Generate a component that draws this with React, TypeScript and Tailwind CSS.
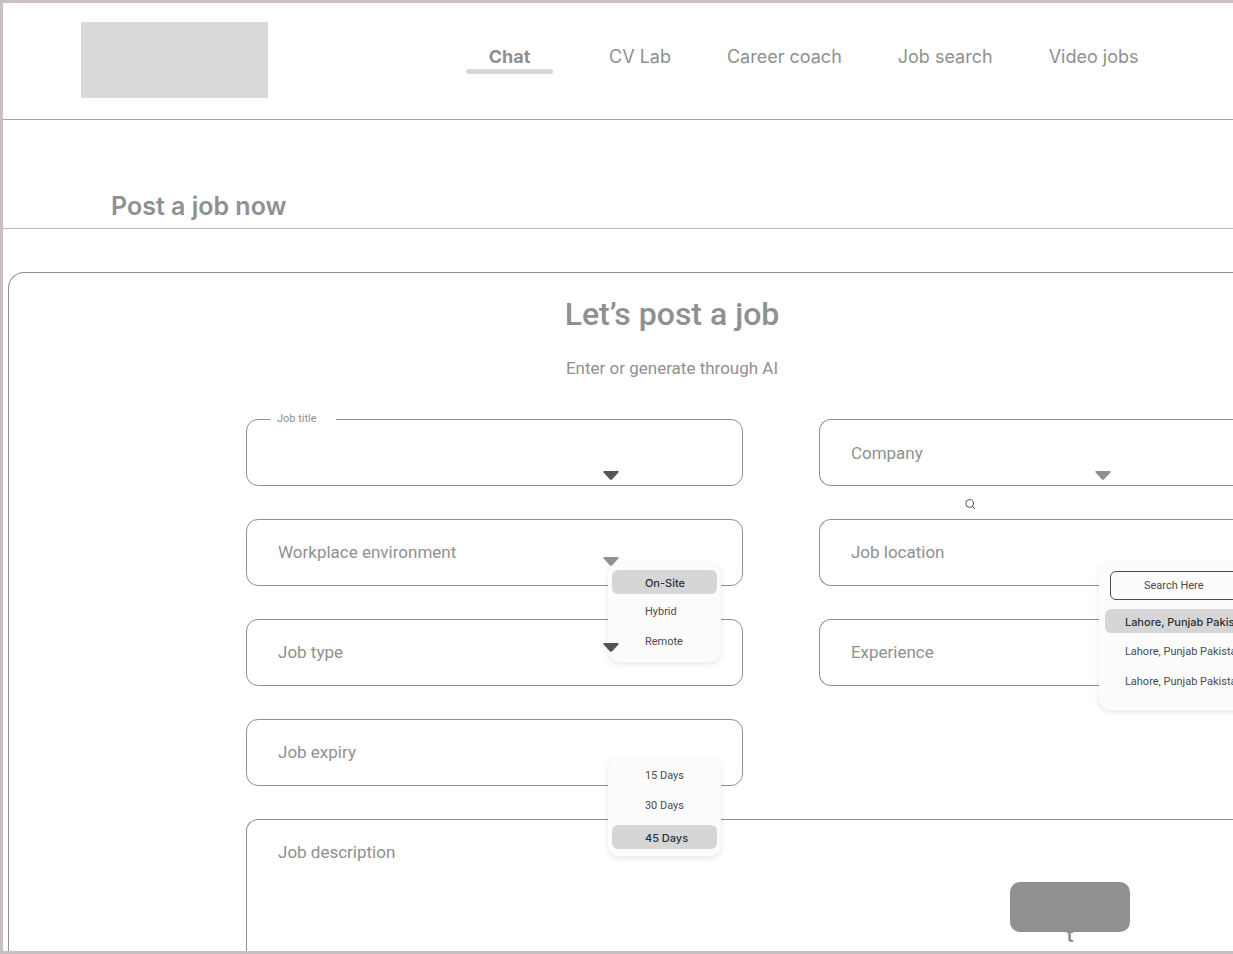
import React from "react";

const navItems = ["CV Lab", "Career coach", "Job search", "Video jobs"];

const fieldBox =
  "block h-[67px] w-full appearance-none border border-[#909090] bg-white pl-[31px] font-[Roboto,sans-serif] text-[17px] text-[#909090] placeholder-[#909090] outline-none";
const panelBox =
  "absolute z-10 rounded-xl bg-[#fcfcfc] shadow-[0_2px_6px_rgba(0,0,0,0.1)] font-[Roboto,sans-serif] text-[11px] leading-4 text-[#4b4b4b]";
const activeItem =
  "block h-6 w-full rounded-md bg-[#d6d6d6] pt-0.5 text-left font-[Inter,sans-serif] text-[11px] font-medium text-[#263238]";

function Caret({ className }: { className: string }) {
  return (
    <svg viewBox="0 0 16 9" className={`absolute z-20 h-[9px] w-4 ${className}`} aria-hidden="true">
      <path
        d="M1.2 0h13.6c.9 0 1.3.9.6 1.5L9.2 8.3c-.7.7-1.7.7-2.4 0L.6 1.5C-.1.9.3 0 1.2 0Z"
        fill="currentColor"
      />
    </svg>
  );
}

function SelectField({ label, open }: { label: string; open?: boolean }) {
  return (
    <select
      aria-label={label}
      className={`${fieldBox} ${open ? "rounded-l-xl border-r-0" : "rounded-xl"}`}
    >
      <option>{label}</option>
    </select>
  );
}

export default function App() {
  return (
    <div className="flex min-h-screen flex-col overflow-hidden border-y-3 border-l-3 border-[#c8c0c0] bg-white font-[Inter,sans-serif] text-[#909090]">
      <header className="flex h-[117px] shrink-0 items-start border-b border-[#a3a3a3] pl-[78px] pt-[19px]">
        <div className="h-[76px] w-[187px] shrink-0 bg-[#d9d9d9]" />
        <nav className="ml-[198px] flex gap-14 whitespace-nowrap pt-[21px] text-lg leading-7">
          <a href="#chat" className="flex w-[87px] flex-col items-center font-bold">
            <span className="h-[26px]">Chat</span>
            <span className="h-[5px] w-full rounded-full bg-[#d6d6d6]" />
          </a>
          {navItems.map((item) => (
            <a key={item} href="#nav">
              {item}
            </a>
          ))}
        </nav>
      </header>

      <div className="flex h-[109px] shrink-0 items-end border-b border-[#b8b8b8] pb-[6px] pl-[108px]">
        <h1 className="text-[25px] font-semibold leading-8">Post a job now</h1>
      </div>

      <main className="ml-[5px] mt-[43px] flex flex-1 flex-col rounded-tl-2xl border-l border-t border-[#909090]">
        <div className="pl-[102px] pt-[21px] text-center font-[Roboto,sans-serif]">
          <h2 className="text-[32px] font-medium leading-10">Let’s post a job</h2>
          <p className="mt-[22px] text-[17px] leading-6">Enter or generate through AI</p>
        </div>

        <form className="mt-[39px] flex flex-1 flex-col gap-[33px] pl-[237px]">
          <div className="grid grid-cols-[6fr_5fr] gap-x-[76px] gap-y-[33px]">
            <div className="relative">
              <input id="job-title" type="text" className={`${fieldBox} rounded-xl`} />
              <label
                htmlFor="job-title"
                className="absolute left-6 -top-2 w-[66px] bg-white pl-[7px] font-[Roboto,sans-serif] text-[11px] leading-4"
              >
                Job title
              </label>
              <Caret className="right-[124px] top-[52px] text-[#555555]" />
            </div>
            <div className="relative">
              <input
                type="text"
                aria-label="Company"
                placeholder="Company"
                className={`${fieldBox} rounded-l-xl border-r-0`}
              />
              <Caret className="left-[276px] top-[52px] text-[#909090]" />
            </div>

            <div className="relative">
              <SelectField label="Workplace environment" />
              <Caret className="right-[124px] top-[38px] text-[#909090]" />
              <div className={`${panelBox} right-[22px] top-11 h-[99px] w-[113px] px-1 pt-[7px]`}>
                <button type="button" className={`${activeItem} pl-[33px]`}>
                  On-Site
                </button>
                <button type="button" className="mt-[10px] block w-full pl-[33px] text-left">
                  Hybrid
                </button>
                <button type="button" className="mt-[14px] block w-full pl-[33px] text-left">
                  Remote
                </button>
              </div>
            </div>
            <div className="relative">
              <svg
                viewBox="0 0 10 10"
                className="absolute left-[146px] -top-5 h-[10px] w-[10px] text-[#37474f]"
                fill="none"
                stroke="currentColor"
                strokeWidth="0.9"
                strokeLinecap="round"
                aria-hidden="true"
              >
                <circle cx="4.6" cy="4.4" r="3.9" />
                <path d="M7.4 7.3 9.5 9.5" />
              </svg>
              <SelectField label="Job location" open />
              <div className={`${panelBox} left-[280px] top-11 h-[147px] w-[173px] whitespace-nowrap pl-[6px] pt-2`}>
                <input
                  type="text"
                  aria-label="Search location"
                  placeholder="Search Here"
                  className="ml-[5px] block h-[29px] w-[151px] rounded-md border border-[#4b4b4b] bg-transparent pl-[33px] placeholder-[#4b4b4b] outline-none"
                />
                <button type="button" className={`${activeItem} mt-[9px] pl-5`}>
                  Lahore, Punjab Pakistan
                </button>
                <button type="button" className="mt-[11px] block pl-5 text-left">
                  Lahore, Punjab Pakistan
                </button>
                <button type="button" className="mt-[14px] block pl-5 text-left">
                  Lahore, Punjab Pakistan
                </button>
              </div>
            </div>

            <div className="relative">
              <SelectField label="Job type" />
              <Caret className="right-[124px] top-6 text-[#555555]" />
            </div>
            <SelectField label="Experience" open />

            <div className="relative">
              <SelectField label="Job expiry" />
              <div className={`${panelBox} right-[22px] top-[38px] h-[99px] w-[113px] px-1 pt-[11px]`}>
                <button type="button" className="block w-full pl-[33px] text-left">
                  15 Days
                </button>
                <button type="button" className="mt-[14px] block w-full pl-[33px] text-left">
                  30 Days
                </button>
                <button type="button" className={`${activeItem} mt-[11px] pl-[33px]`}>
                  45 Days
                </button>
              </div>
            </div>
          </div>

          <div className="relative flex min-h-[132px] flex-1">
            <textarea
              aria-label="Job description"
              placeholder="Job description"
              className="w-full resize-none rounded-tl-xl border-l border-t border-[#909090] bg-white pl-[31px] pt-[18px] font-[Roboto,sans-serif] text-[17px] leading-7 placeholder-[#909090] outline-none"
            />
            <button
              type="button"
              className="absolute right-[103px] top-[63px] flex h-[50px] w-[120px] items-end justify-center rounded-[10px] bg-[#909090] text-xl font-semibold"
            >
              <span className="-mb-[17px]">t</span>
            </button>
          </div>
        </form>
      </main>
    </div>
  );
}
